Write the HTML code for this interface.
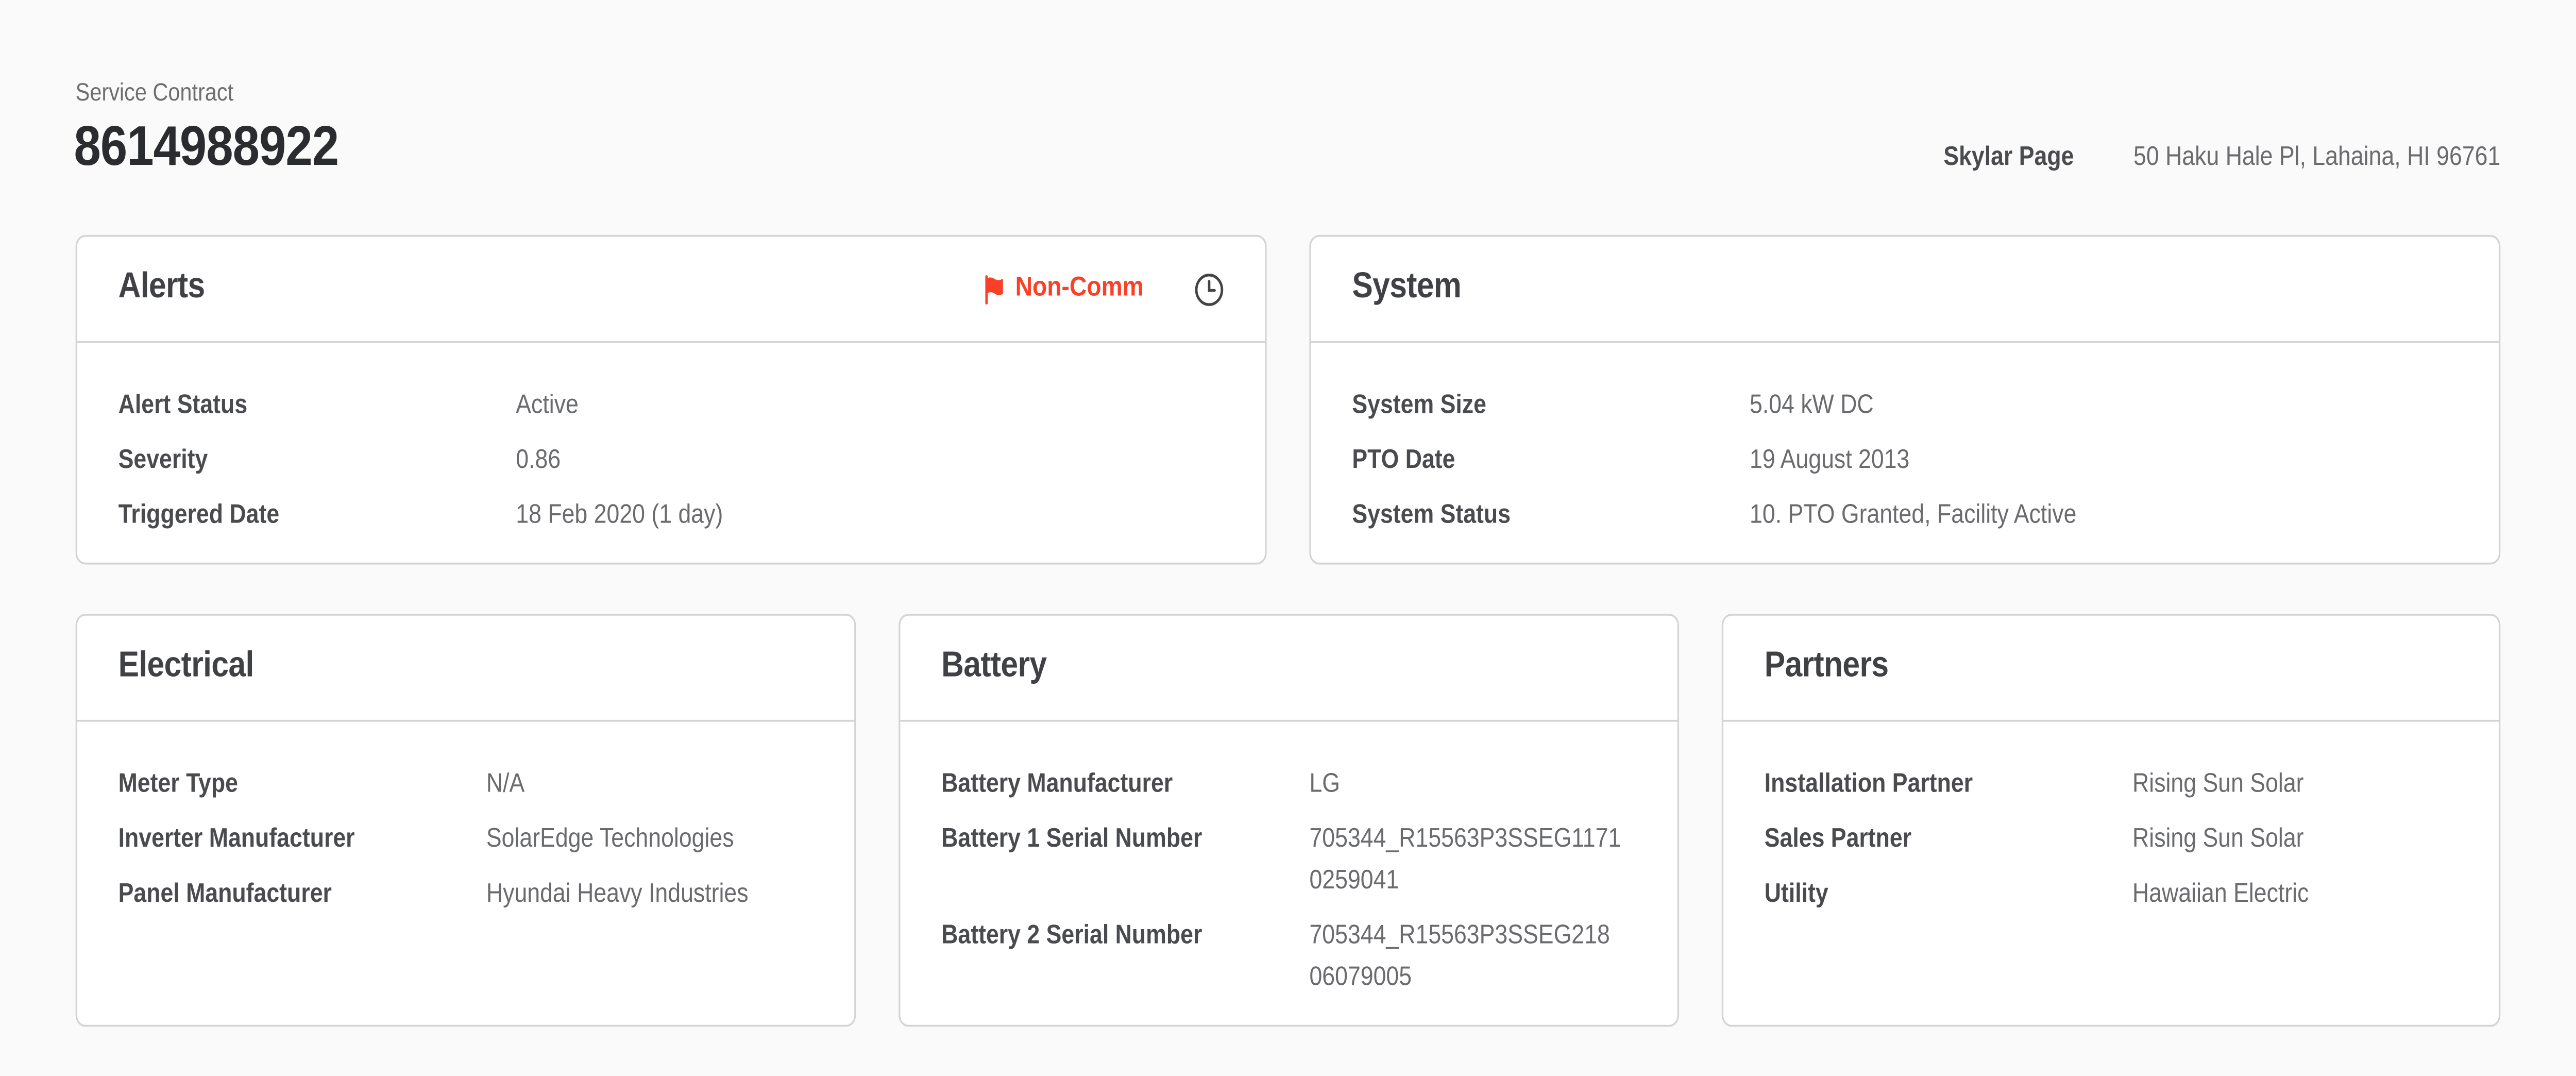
<!DOCTYPE html>
<html><head><meta charset="utf-8"><style>
html,body{margin:0;padding:0;background:#fafafa;overflow:hidden;}
body{width:100vw;height:100vh;position:relative;}
#w{transform:scale(3.67347);transform-origin:0 0;width:1568px;height:568px;position:absolute;left:0;top:0;font-family:"Liberation Sans",sans-serif;color:#404144;}
.a{position:absolute;}
.card{position:absolute;background:#fff;border:1px solid #d4d4d4;border-radius:6px;box-sizing:border-box;}
.hd{height:56px;border-bottom:1px solid #d4d4d4;box-sizing:border-box;position:relative;}
.hd .t{position:absolute;left:25px;top:16px;font-size:19px;font-weight:bold;color:#404144;letter-spacing:-0.2px}
.bd{padding:21px 25px 0 25px;position:relative;}
.r{position:relative;font-size:14px;line-height:22px;margin-bottom:7px;}
.r .l{font-weight:bold;color:#4a4b4e;}
.r .v{position:absolute;top:0;color:#6a6b6e;}
</style></head><body><div id="w">
<div class="a" style="left:46px;top:41px;font-size:13px;color:#6e6e6e">Service Contract</div>
<div class="a" style="left:45px;top:61px;font-size:29.5px;font-weight:bold;color:#2b2c30;letter-spacing:-0.3px">8614988922</div>
<div class="a" style="left:1183px;top:74px;font-size:14px;font-weight:bold;color:#4a4b4e">Skylar Page</div>
<div class="a" style="right:46px;top:74px;font-size:14px;color:#6a6b6e">50 Haku Hale Pl, Lahaina, HI 96761</div>

<div class="card" style="left:46px;top:124px;width:725px;height:174px">
<div class="hd"><div class="t">Alerts</div>
<svg class="a" style="left:552px;top:20px" width="16" height="16" viewBox="0 0 16 16"><path d="M1.5 1v14" stroke="#fc3f27" stroke-width="1.5" stroke-linecap="round"/><path d="M1.5 2c2-1 3.5-0.5 5 0.3s3 0.8 5-0.2v8c-2 1-3.5 0.8-5-0.1s-3-1-5 0z" fill="#fc3f27"/></svg>
<div class="a" style="left:571px;top:19px;font-size:14.5px;font-weight:bold;color:#fc3f27">Non-Comm</div>
<svg class="a" style="left:680px;top:19px" width="18" height="18" viewBox="0 0 18 18"><circle cx="9" cy="9" r="7.8" fill="none" stroke="#444" stroke-width="1.5"/><path d="M9 4.5V9.3h3.3" fill="none" stroke="#444" stroke-width="1.5" stroke-linecap="round"/></svg>
</div>
<div class="bd">
<div class="r"><span class="l">Alert Status</span><span class="v" style="left:242px">Active</span></div>
<div class="r"><span class="l">Severity</span><span class="v" style="left:242px">0.86</span></div>
<div class="r"><span class="l">Triggered Date</span><span class="v" style="left:242px">18 Feb 2020 (1 day)</span></div>
</div></div>

<div class="card" style="left:797px;top:124px;width:725px;height:174px">
<div class="hd"><div class="t">System</div></div>
<div class="bd">
<div class="r"><span class="l">System Size</span><span class="v" style="left:242px">5.04 kW DC</span></div>
<div class="r"><span class="l">PTO Date</span><span class="v" style="left:242px">19 August 2013</span></div>
<div class="r"><span class="l">System Status</span><span class="v" style="left:242px">10. PTO Granted, Facility Active</span></div>
</div></div>

<div class="card" style="left:46px;top:324px;width:475px;height:218px">
<div class="hd"><div class="t">Electrical</div></div>
<div class="bd">
<div class="r"><span class="l">Meter Type</span><span class="v" style="left:224px">N/A</span></div>
<div class="r"><span class="l">Inverter Manufacturer</span><span class="v" style="left:224px">SolarEdge Technologies</span></div>
<div class="r"><span class="l">Panel Manufacturer</span><span class="v" style="left:224px">Hyundai Heavy Industries</span></div>
</div></div>

<div class="card" style="left:547px;top:324px;width:475px;height:218px">
<div class="hd"><div class="t">Battery</div></div>
<div class="bd">
<div class="r"><span class="l">Battery Manufacturer</span><span class="v" style="left:224px">LG</span></div>
<div class="r" style="height:44px"><span class="l">Battery 1 Serial Number</span><span class="v" style="left:224px">705344_R15563P3SSEG1171<br>0259041</span></div>
<div class="r"><span class="l">Battery 2 Serial Number</span><span class="v" style="left:224px">705344_R15563P3SSEG218<br>06079005</span></div>
</div></div>

<div class="card" style="left:1048px;top:324px;width:474px;height:218px">
<div class="hd"><div class="t">Partners</div></div>
<div class="bd">
<div class="r"><span class="l">Installation Partner</span><span class="v" style="left:224px">Rising Sun Solar</span></div>
<div class="r"><span class="l">Sales Partner</span><span class="v" style="left:224px">Rising Sun Solar</span></div>
<div class="r"><span class="l">Utility</span><span class="v" style="left:224px">Hawaiian Electric</span></div>
</div></div>
</div>
<script>
(function(){var w=document.getElementById('w');function f(){var sx=window.innerWidth/1568,sy=window.innerHeight/568;if(sx>0&&sy>0)w.style.transform='scale('+sx+','+sy+')';}f();window.addEventListener('resize',f);})();
</script>
</body></html>
